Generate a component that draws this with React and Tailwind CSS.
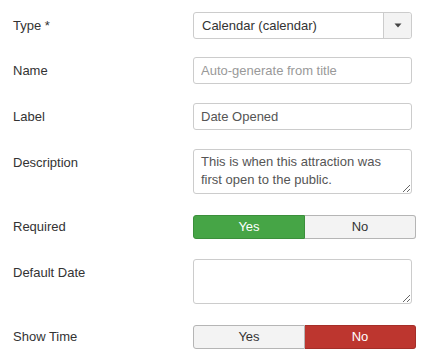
import React from 'react';

const font = { fontFamily: '"Liberation Sans", Arial, sans-serif' };

const Label = ({ children, tight }) => (
  <div className={`w-[180px] shrink-0 text-[13px] leading-[18px] text-[#333] ${tight ? 'pt-[3px]' : 'pt-[5px]'}`}>
    {children}
  </div>
);

const inputCls =
  'w-[219px] h-[27px] rounded-[3px] border border-[#ccc] bg-white px-[7px] text-[13px] text-[#555] placeholder:text-[#999] outline-none';

const textareaCls =
  'block w-[219px] h-[45px] rounded-[3px] border border-[#ccc] bg-white px-[7px] py-[3px] text-[13px] leading-[18px] text-[#555] outline-none resize';

const Toggle = ({ value }) => (
  <div className="flex w-[223px] h-[24px] text-[13px]">
    <div
      className={`flex-1 flex items-center justify-center rounded-l-[3px] border ${
        value ? 'bg-[#46a546] border-[#3b8f3b] text-white' : 'bg-[#f3f3f3] border-[#b5b5b5] text-[#333]'
      }`}
    >
      Yes
    </div>
    <div
      className={`flex-1 flex items-center justify-center rounded-r-[3px] border border-l-0 ${
        value ? 'bg-[#f3f3f3] border-[#b5b5b5] text-[#333]' : 'bg-[#bd362f] border-[#a52e28] text-white'
      }`}
    >
      No
    </div>
  </div>
);

export default function App() {
  return (
    <div className="bg-white w-[439px] h-[362px] pl-[13px] pt-[12px]" style={font}>
      <div className="flex h-[45px]">
        <Label>Type *</Label>
        <div className="flex w-[219px] h-[27px] rounded-[3px] border border-[#ccc] bg-white">
          <div className="flex-1 flex items-center px-[8px] text-[13px] text-[#333]">Calendar (calendar)</div>
          <div className="w-[28px] flex items-center justify-center border-l border-[#ccc] bg-[#f3f3f3] rounded-r-[3px]">
            <svg width="8" height="5" viewBox="0 0 8 5">
              <path d="M0.5 0.5 L7.5 0.5 L4 4.5 Z" fill="#444" />
            </svg>
          </div>
        </div>
      </div>

      <div className="flex h-[46px]">
        <Label>Name</Label>
        <input className={inputCls} placeholder="Auto-generate from title" style={font} />
      </div>

      <div className="flex h-[46px]">
        <Label>Label</Label>
        <input className={inputCls} defaultValue="Date Opened" style={font} />
      </div>

      <div className="flex h-[66px]">
        <Label>Description</Label>
        <textarea
          className={textareaCls}
          style={font}
          defaultValue="This is when this attraction was first open to the public."
        />
      </div>

      <div className="flex h-[44px]">
        <Label tight>Required</Label>
        <Toggle value={true} />
      </div>

      <div className="flex h-[66px]">
        <Label>Default Date</Label>
        <textarea className={textareaCls} style={font} />
      </div>

      <div className="flex h-[30px]">
        <Label tight>Show Time</Label>
        <Toggle value={false} />
      </div>
    </div>
  );
}
